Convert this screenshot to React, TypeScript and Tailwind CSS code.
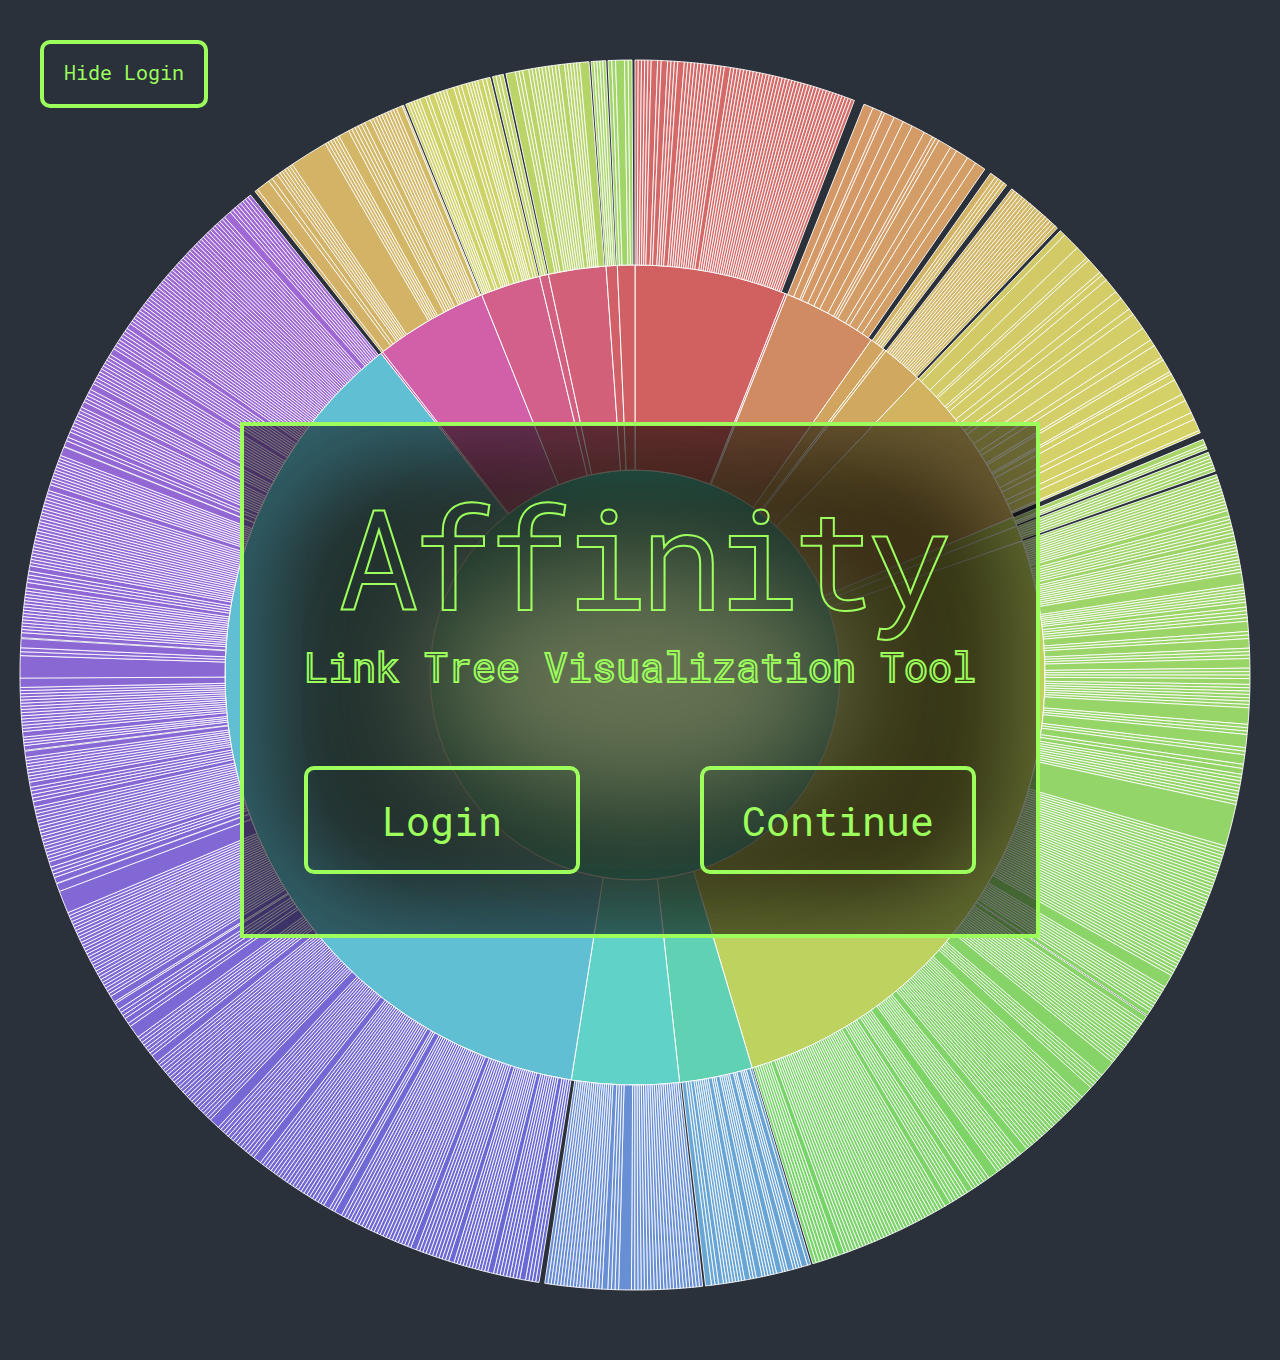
const CX = 635;
const CY = 675;
const R1 = 205;
const R2 = 410;
const R3 = 615;
const PITCH = 0.303;
const HALF_STROKE = 0.04;

const deg = (r: number) => (r * 180) / Math.PI;

// Angles (clockwise from north) of rim points given by one coordinate.
const T = (x: number) => (deg(Math.asin((x - CX) / R3)) + 360) % 360;
const B = (x: number) => 180 - deg(Math.asin((x - CX) / R3));
const R = (y: number) => 90 + deg(Math.asin((y - CY) / R3));
const L = (y: number) => 270 - deg(Math.asin((y - CY) / R3));

type Span = [number, number];
type Group = { from: number; to: number; c0: number[]; c1: number[]; wide?: Span[]; edges?: number[] };

const spans = (f: (n: number) => number, list: Span[]): Span[] =>
  list.map(([a, b]) => {
    const p = f(a);
    const q = f(b);
    return p < q ? [p - HALF_STROKE, q + HALF_STROKE] : [q - HALF_STROKE, p + HALF_STROKE];
  });

const groups: Group[] = [
  {
    from: 0, to: 20.9, c0: [211, 104, 104], c1: [214, 108, 104],
    wide: spans(T, [[651.7, 657.3], [661.7, 667.3], [678.3, 684], [725, 730.3]]),
  },
  {
    from: 21.86, to: 34.67, c0: [212, 152, 103], c1: [211, 160, 103],
    edges: [873, 882, 884.7, 894.3, 903.3, 912.3, 924.3, 932.7, 935.7, 939, 950.7, 956.7, 967.7, 975.7].map(T),
  },
  { from: 35.34, to: 37.18, c0: [211, 180, 102], c1: [211, 182, 102], wide: spans(T, [[991, 995.3]]) },
  { from: 37.78, to: 43.38, c0: [211, 181, 102], c1: [211, 186, 102] },
  {
    from: 43.75, to: 66.8, c0: [210, 202, 103], c1: [213, 211, 104],
    edges: [235, 247.7, 257.7, 260, 272.3, 275, 280, 291.7, 298.3, 309, 314.3, 328.3, 340, 345.7, 357.3, 360, 371.7, 374, 380, 394.3, 400.7, 412.7, 419.3, 430.5].map(R),
  },
  { from: 67.47, to: 68.46, c0: [167, 213, 104], c1: [167, 213, 104], wide: [[67.47, 67.98]] },
  { from: 68.77, to: 70.64, c0: [163, 213, 104], c1: [163, 213, 104] },
  {
    from: 70.97, to: 163.19, c0: [162, 213, 104], c1: [118, 212, 104],
    wide: [
      ...spans(R, [
        [511, 515.7], [536.7, 541], [572.7, 584], [602.7, 606.7], [621.7, 631], [639, 647.7], [659, 667.7],
        [679, 684], [708.3, 724], [735, 747.3], [755.3, 764], [769, 774], [805, 845.7], [976, 986.7],
        [1011.7, 1015], [1016.7, 1021], [1062.7, 1075], [1088, 1097],
      ]),
      ...spans(B, [[1020.7, 1026.7], [989.3, 997.3], [967.7, 972.3], [945.3, 950], [839, 844]]),
    ],
  },
  {
    from: 163.4, to: 173.46, c0: [104, 163, 212], c1: [104, 166, 212],
    wide: spans(B, [[802, 807], [788, 793], [777, 782], [756.7, 761.7], [745, 750], [719, 723], [706, 711]]),
  },
  { from: 173.68, to: 188.44, c0: [104, 144, 212], c1: [104, 140, 212], wide: spans(B, [[619, 631], [602.3, 607.3]]) },
  {
    from: 188.98, to: 321.3, c0: [104, 104, 212], c1: [160, 104, 212],
    wide: [
      ...spans(B, [[520, 525], [488, 493], [449, 453.5], [411, 416], [335, 341], [324, 329], [254, 260], [210.7, 218]]),
      ...spans(L, [
        [1056, 1061.7], [1026.7, 1036.7], [1019, 1023], [1004, 1009], [996.7, 1001.7], [891.7, 912.3],
        [884.3, 891], [878, 883], [862.3, 866.7], [802, 806.7], [782.7, 787], [751.7, 757], [746, 750],
        [732, 736.7], [678.3, 687], [656, 677.7], [639, 647.3], [633, 637.3], [582.7, 587.3], [566, 570.7],
        [485, 490], [447.3, 455], [441, 446], [432.3, 436.7], [402, 406.7], [384, 389], [349, 354], [324, 328],
        [212.3, 216.7],
      ]),
    ],
  },
  {
    from: 321.84, to: 337.9, c0: [211, 178, 103], c1: [211, 186, 103],
    wide: spans(T, [[258, 268.3], [272.5, 277], [292.7, 325], [339.3, 348.3], [365, 370], [396.7, 401.7]]),
  },
  {
    from: 338.11, to: 346.36, c0: [208, 210, 103], c1: [203, 212, 103],
    wide: spans(T, [[420, 425], [429, 434], [446.7, 453.3], [461.7, 466], [478, 482]]),
  },
  { from: 346.6, to: 347.63, c0: [190, 212, 104], c1: [190, 212, 104] },
  {
    from: 347.86, to: 355.7, c0: [187, 212, 104], c1: [180, 212, 104],
    wide: spans(T, [[506.3, 515], [523, 528.3], [559, 564], [580, 588.5]]),
  },
  { from: 355.9, to: 357.27, c0: [168, 213, 104], c1: [168, 213, 104] },
  { from: 357.48, to: 359.72, c0: [162, 213, 104], c1: [162, 213, 104], wide: spans(T, [[616, 624]]) },
];

const middle: [number, number, string][] = [
  [0, 21.5, '#d16060'],
  [21.5, 21.8, '#d1605f'],
  [21.8, 35.2, '#d18b62'],
  [35.2, 37.4, '#d1a460'],
  [37.4, 37.75, '#d1a860'],
  [37.75, 43.65, '#d1a860'],
  [43.65, 67.35, '#d2b460'],
  [67.35, 68.7, '#bed25f'],
  [68.7, 70.9, '#bed25f'],
  [70.9, 163.4, '#bed25f'],
  [163.4, 173.75, '#60d2b3'],
  [173.75, 188.95, '#61d2c8'],
  [188.95, 321.7, '#60bfd3'],
  [321.7, 322, '#d160b0'],
  [322, 338.05, '#d160a9'],
  [338.05, 346.55, '#d2608a'],
  [346.55, 347.8, '#d26080'],
  [347.8, 355.95, '#d26079'],
  [355.95, 357.53, '#d26068'],
  [357.53, 360, '#d16064'],
];

function point(r: number, a: number) {
  const t = (a * Math.PI) / 180;
  return `${(CX + r * Math.sin(t)).toFixed(2)} ${(CY - r * Math.cos(t)).toFixed(2)}`;
}

function sector(r0: number, r1: number, a: number, b: number) {
  const big = b - a > 180 ? 1 : 0;
  return `M${point(r0, a)}L${point(r1, a)}A${r1} ${r1} 0 ${big} 1 ${point(r1, b)}L${point(r0, b)}A${r0} ${r0} 0 ${big} 0 ${point(r0, a)}Z`;
}

function cells(g: Group): Span[] {
  if (g.edges) {
    const e = [g.from, ...g.edges, g.to];
    return e.slice(1).map((b, i): Span => [e[i], b]);
  }
  const out: Span[] = [];
  const fill = (a: number, b: number) => {
    const n = Math.round((b - a) / PITCH);
    for (let i = 0; i < n; i++) out.push([a + ((b - a) * i) / n, a + ((b - a) * (i + 1)) / n]);
  };
  let at = g.from;
  for (const [a, b] of [...(g.wide ?? [])].sort((p, q) => p[0] - q[0])) {
    fill(at, a);
    out.push([a, b]);
    at = b;
  }
  fill(at, g.to);
  return out;
}

function shade(g: Group, a: number) {
  const t = (a - g.from) / (g.to - g.from);
  return `rgb(${g.c0.map((v, i) => Math.round(v + (g.c1[i] - v) * t)).join(',')})`;
}

function Sunburst() {
  return (
    <svg width="1280" height="1360" viewBox="0 0 1280 1360" className="block" stroke="#fff" strokeWidth="1">
      <circle cx={CX} cy={CY} r={R1} fill="#3ccabc" />
      {middle.map(([a, b, c]) => (
        <path key={a} d={sector(R1, R2, a, b)} fill={c} />
      ))}
      <g strokeWidth="0.9">
        {groups.map((g) => cells(g).map(([a, b]) => <path key={a} d={sector(R2, R3, a, b)} fill={shade(g, a)} />))}
      </g>
    </svg>
  );
}

function OutlineButton({ label, className }: { label: string; className: string }) {
  return (
    <button className={`flex items-center justify-center rounded-[10px] border-4 border-[#9cff5c] ${className}`}>
      {label}
    </button>
  );
}

export default function App() {
  return (
    <div className="relative h-[1360px] w-[1280px] overflow-hidden bg-[#2b313b] font-['Roboto_Mono','Liberation_Mono',monospace] text-[#9cff5c]">
      <Sunburst />
      <div className="absolute left-10 top-10">
        <OutlineButton label="Hide Login" className="h-[68px] w-[168px] pb-1 text-xl" />
      </div>
      <div className="absolute left-[240px] top-[422px] h-[516px] w-[800px] overflow-hidden border-4 border-[#9cff5c] bg-black/50">
        <div className="absolute inset-[30px] rounded-[140px] bg-[#180f03]/58 blur-[38px]" />
        <div className="absolute left-[186px] top-[132px] h-[250px] w-[420px] rounded-[50%] bg-[#808a60]/75 blur-[60px]" />
        <div className="relative flex h-full flex-col px-[60px] pb-[60px]">
          <h1 className="mt-[46px] text-center text-[140px] leading-[168px] tracking-[-8px] text-transparent [-webkit-text-stroke:2px_#9cff5c]">
            Affinity
          </h1>
          <h2 className="mt-px whitespace-nowrap text-center text-[40px] leading-[52px] text-transparent [-webkit-text-stroke:2px_#9cff5c]">
            Link Tree Visualization Tool
          </h2>
          <div className="mt-auto flex justify-between text-[40px]">
            <OutlineButton label="Login" className="h-[108px] w-[276px] pt-0.5" />
            <OutlineButton label="Continue" className="h-[108px] w-[276px] pt-0.5" />
          </div>
        </div>
      </div>
    </div>
  );
}
